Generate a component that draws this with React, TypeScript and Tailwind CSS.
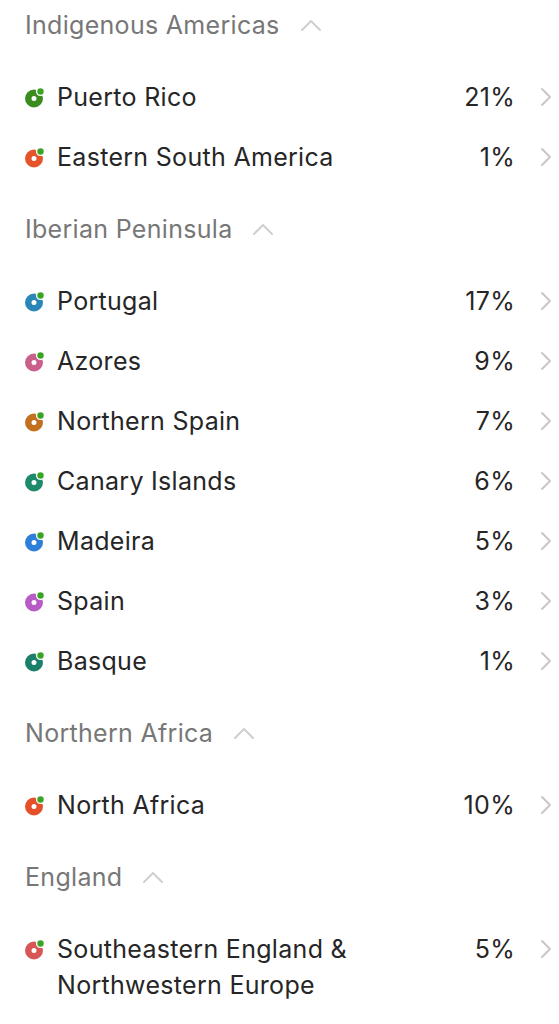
import React from "react";

type Item = { name: string[]; pct: string; color: string };
type Section = { title: string; items: Item[] };

const sections: Section[] = [
  {
    title: "Indigenous Americas",
    items: [
      { name: ["Puerto Rico"], pct: "21%", color: "#3b8c1f" },
      { name: ["Eastern South America"], pct: "1%", color: "#e5532b" },
    ],
  },
  {
    title: "Iberian Peninsula",
    items: [
      { name: ["Portugal"], pct: "17%", color: "#2a86b6" },
      { name: ["Azores"], pct: "9%", color: "#c95f8b" },
      { name: ["Northern Spain"], pct: "7%", color: "#c1701f" },
      { name: ["Canary Islands"], pct: "6%", color: "#1d8a6c" },
      { name: ["Madeira"], pct: "5%", color: "#2d7fd8" },
      { name: ["Spain"], pct: "3%", color: "#b65cc4" },
      { name: ["Basque"], pct: "1%", color: "#1a8069" },
    ],
  },
  {
    title: "Northern Africa",
    items: [{ name: ["North Africa"], pct: "10%", color: "#e5502a" }],
  },
  {
    title: "England",
    items: [
      {
        name: ["Southeastern England &", "Northwestern Europe"],
        pct: "5%",
        color: "#d85656",
      },
    ],
  },
];

function Dot({ color }: { color: string }) {
  return (
    <svg width="22" height="22" viewBox="0 0 22 22" className="shrink-0">
      <circle cx="10" cy="12.5" r="5.75" fill="none" stroke={color} strokeWidth="6.5" />
      <circle cx="16.5" cy="5.5" r="4.6" fill="#ffffff" />
      <circle cx="16.5" cy="5.5" r="3.2" fill="#3aa322" />
    </svg>
  );
}

function ChevronRight() {
  return (
    <svg width="14" height="22" viewBox="0 0 14 22" className="shrink-0">
      <path d="M3 3 L11 11 L3 19" fill="none" stroke="#c8c8c8" strokeWidth="2" strokeLinecap="round" strokeLinejoin="round" />
    </svg>
  );
}

function ChevronUp() {
  return (
    <svg width="22" height="14" viewBox="0 0 22 14" className="shrink-0">
      <path d="M2 12 L11 3 L20 12" fill="none" stroke="#cfcfcf" strokeWidth="2" strokeLinecap="round" strokeLinejoin="round" />
    </svg>
  );
}

export default function App() {
  return (
    <div
      className="w-[559px] bg-white text-[25px] tracking-[0.3px]"
      style={{ fontFamily: "Inter, 'Noto Sans', sans-serif" }}
    >
      {sections.map((s, si) => (
        <div key={s.title}>
          <div
            className={`flex items-center gap-[20px] pl-[25px] text-[#777777] ${
              si === 0 ? "h-[67px] pb-[17px]" : "h-[84px]"
            }`}
          >
            <span className="leading-[50px]">{s.title}</span>
            <ChevronUp />
          </div>
          {s.items.map((it) => (
            <div key={it.pct + it.name[0]} className="flex items-start py-[12px] pl-[24px] pr-[6px] text-[#262626]">
              <div className="flex h-[36px] items-center">
                <Dot color={it.color} />
              </div>
              <div className="ml-[11px] flex-1 leading-[36px]">
                {it.name.map((n) => (
                  <div key={n}>{n}</div>
                ))}
              </div>
              <div className="leading-[36px]">{it.pct}</div>
              <div className="ml-[24px] flex h-[36px] items-center">
                <ChevronRight />
              </div>
            </div>
          ))}
        </div>
      ))}
    </div>
  );
}
